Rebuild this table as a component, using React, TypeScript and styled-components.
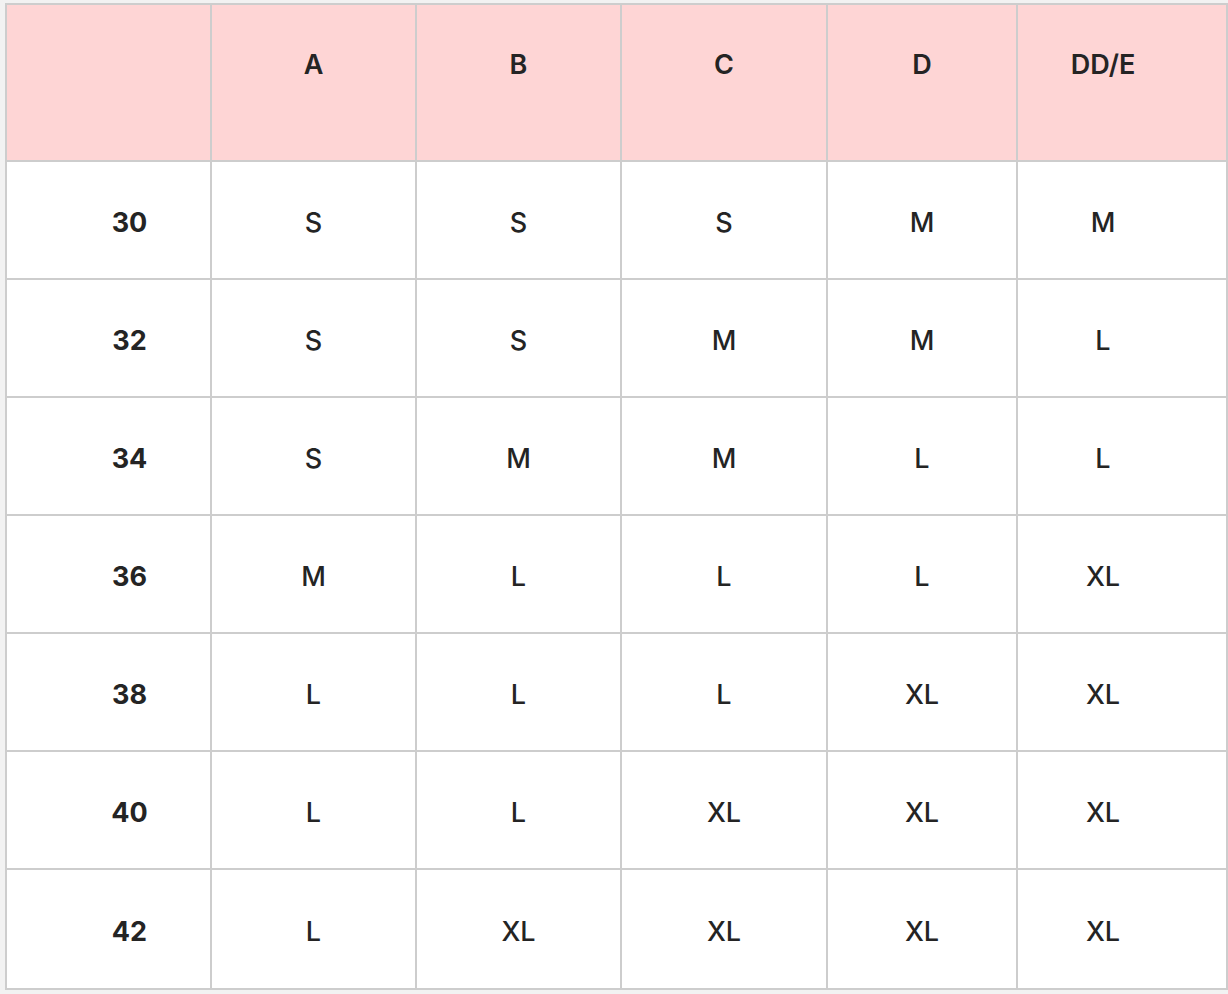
import React from "react";
import styled, { createGlobalStyle } from "styled-components";

const GlobalStyle = createGlobalStyle`
  html, body {
    margin: 0;
    padding: 0;
    background: #f2f2f2;
  }
  body {
    font-family: Inter, "Noto Sans", "Liberation Sans", sans-serif;
    color: #242424;
  }
`;

const Page = styled.div`
  padding: 3px 0 4px 5px;
`;

const Grid = styled.div`
  display: grid;
  grid-template-columns: 203px 203px 203px 204px 188px 208px;
  grid-template-rows: 155px repeat(6, 116px) 118px;
  gap: 2px;
  padding: 2px;
  background: #cdcdcd;
  width: 1223px;
  box-sizing: border-box;
`;

const Cell = styled.div<{ $head?: boolean; $first?: boolean; $last?: boolean }>`
  display: flex;
  justify-content: center;
  align-items: ${(p) => (p.$head ? "flex-start" : "center")};
  box-sizing: border-box;
  background: ${(p) => (p.$head ? "#fed5d5" : "#ffffff")};
  font-size: 27px;
  line-height: 1.21;
  font-weight: ${(p) => (p.$head ? 600 : p.$first ? 700 : 500)};
  color: #242424;
  padding-top: ${(p) => (p.$head ? "44px" : "6px")};
  padding-left: ${(p) => (p.$first ? "42px" : "0")};
  padding-right: ${(p) => (p.$last ? "38px" : "0")};
`;

const headers = ["", "A", "B", "C", "D", "DD/E"];
const rows: [string, string[]][] = [
  ["30", ["S", "S", "S", "M", "M"]],
  ["32", ["S", "S", "M", "M", "L"]],
  ["34", ["S", "M", "M", "L", "L"]],
  ["36", ["M", "L", "L", "L", "XL"]],
  ["38", ["L", "L", "L", "XL", "XL"]],
  ["40", ["L", "L", "XL", "XL", "XL"]],
  ["42", ["L", "XL", "XL", "XL", "XL"]],
];

export default function App() {
  return (
    <>
      <GlobalStyle />
      <Page>
        <Grid role="table">
          {headers.map((h, i) => (
            <Cell key={`h${i}`} $head $first={i === 0} $last={i === headers.length - 1} role="columnheader">
              {h}
            </Cell>
          ))}
          {rows.map(([band, sizes]) => (
            <React.Fragment key={band}>
              <Cell $first role="rowheader">{band}</Cell>
              {sizes.map((s, j) => (
                <Cell key={j} $last={j === sizes.length - 1} role="cell">
                  {s}
                </Cell>
              ))}
            </React.Fragment>
          ))}
        </Grid>
      </Page>
    </>
  );
}
